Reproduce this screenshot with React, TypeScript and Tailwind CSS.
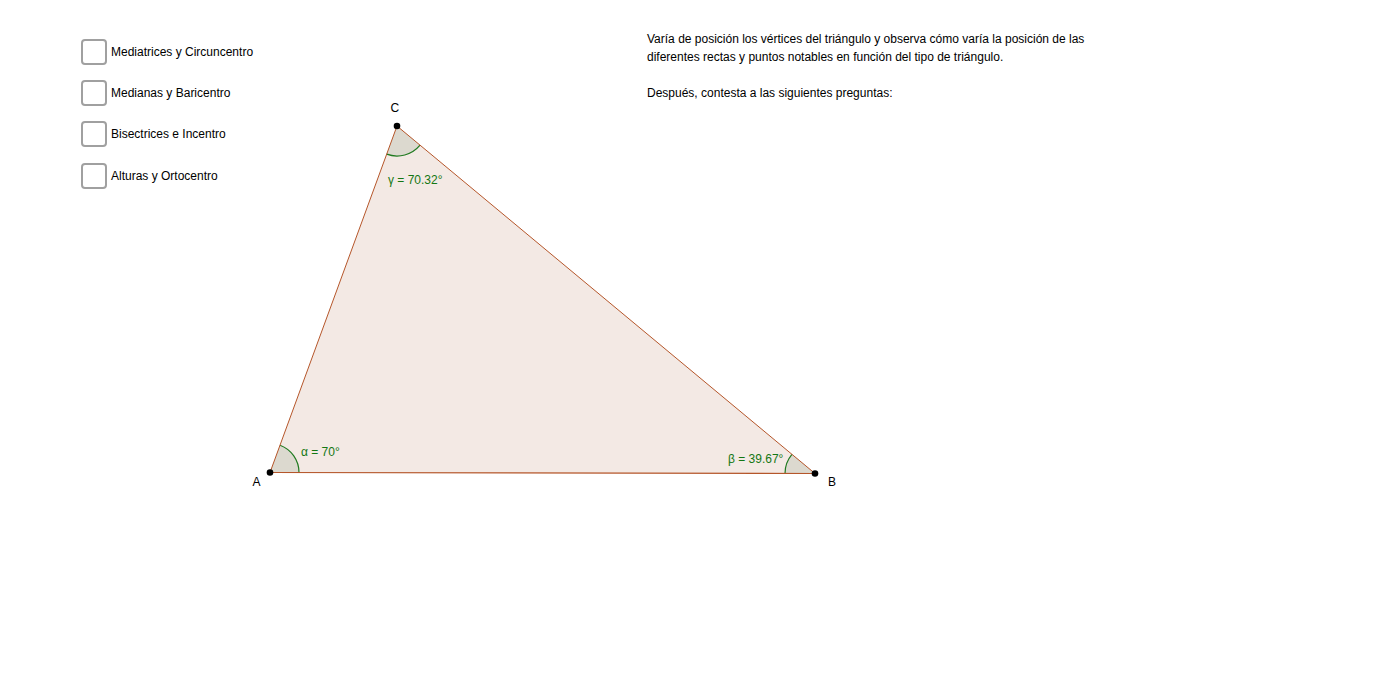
import React from "react";

const A = { x: 270, y: 472.5 };
const B = { x: 815, y: 473.5 };
const C = { x: 397, y: 126 };

function sector(P: { x: number; y: number }, Q: { x: number; y: number }, R: { x: number; y: number }, r: number) {
  const a1 = Math.atan2(Q.y - P.y, Q.x - P.x);
  const a2 = Math.atan2(R.y - P.y, R.x - P.x);
  const p1 = { x: P.x + r * Math.cos(a1), y: P.y + r * Math.sin(a1) };
  const p2 = { x: P.x + r * Math.cos(a2), y: P.y + r * Math.sin(a2) };
  let d = a2 - a1;
  while (d < -Math.PI) d += 2 * Math.PI;
  while (d > Math.PI) d -= 2 * Math.PI;
  const sweep = d > 0 ? 1 : 0;
  return {
    fill: `M ${P.x} ${P.y} L ${p1.x} ${p1.y} A ${r} ${r} 0 0 ${sweep} ${p2.x} ${p2.y} Z`,
    arc: `M ${p1.x} ${p1.y} A ${r} ${r} 0 0 ${sweep} ${p2.x} ${p2.y}`,
  };
}

const sa = sector(A, B, C, 29);
const sb = sector(B, C, A, 30);
const sc = sector(C, A, B, 30);

const labels = ["Mediatrices y Circuncentro", "Medianas y Baricentro", "Bisectrices e Incentro", "Alturas y Ortocentro"];

export default function App() {
  return (
    <div
      className="relative w-[1382px] h-[687px] bg-white overflow-hidden text-black"
      style={{ fontFamily: '"Liberation Sans", Arial, sans-serif' }}
    >
      <svg className="absolute inset-0" width={1382} height={687} viewBox="0 0 1382 687">
        <polygon
          points={`${A.x},${A.y} ${B.x},${B.y} ${C.x},${C.y}`}
          fill="#f3e9e4"
          stroke="none"
        />
        <path d={sa.fill} fill="#dcd9cf" />
        <path d={sb.fill} fill="#dcd9cf" />
        <path d={sc.fill} fill="#dcd9cf" />
        <path d={sa.arc} fill="none" stroke="#1f7a1f" strokeWidth={1.2} />
        <path d={sb.arc} fill="none" stroke="#1f7a1f" strokeWidth={1.2} />
        <path d={sc.arc} fill="none" stroke="#1f7a1f" strokeWidth={1.2} />
        <line x1={A.x} y1={A.y} x2={B.x} y2={B.y} stroke="#b5562a" strokeWidth={1.2} />
        <line x1={B.x} y1={B.y} x2={C.x} y2={C.y} stroke="#b5562a" strokeWidth={1} />
        <line x1={C.x} y1={C.y} x2={A.x} y2={A.y} stroke="#b5562a" strokeWidth={1} />
        <circle cx={A.x} cy={A.y} r={3.3} fill="#000" />
        <circle cx={B.x} cy={B.y} r={3.3} fill="#000" />
        <circle cx={C.x} cy={C.y} r={3.3} fill="#000" />
        <g fontFamily="'Liberation Sans', Arial, sans-serif" fontSize="12">
          <text x={252.5} y={486} fill="#000">A</text>
          <text x={828} y={485.5} fill="#000">B</text>
          <text x={390.5} y={111.5} fill="#000">C</text>
          <text x={301} y={455.5} fill="#137713">α = 70°</text>
          <text x={728} y={462.5} fill="#137713">β = 39.67°</text>
          <text x={388} y={183.5} fill="#137713">γ = 70.32°</text>
        </g>
      </svg>

      <div className="relative flex">
        <div className="flex flex-col pl-[81px] pt-[39px] w-[647px]">
          {labels.map((l, i) => (
            <div
              key={l}
              className={`flex items-center h-[26px] gap-[4px] ${i === 0 ? "" : i === 3 ? "mt-[16px]" : "mt-[15px]"}`}
            >
              <div className="w-[26px] h-[26px] rounded-[4px] border-2 border-[#a0a0a0] bg-white" />
              <span className="text-[12px] leading-[14px]">{l}</span>
            </div>
          ))}
        </div>
        <div className="pt-[30px] text-[12px] leading-[18px] w-[480px]">
          <p>Varía de posición los vértices del triángulo y observa cómo varía la posición de las</p>
          <p>diferentes rectas y puntos notables en función del tipo de triángulo.</p>
          <p>&nbsp;</p>
          <p>Después, contesta a las siguientes preguntas:</p>
        </div>
      </div>
    </div>
  );
}
